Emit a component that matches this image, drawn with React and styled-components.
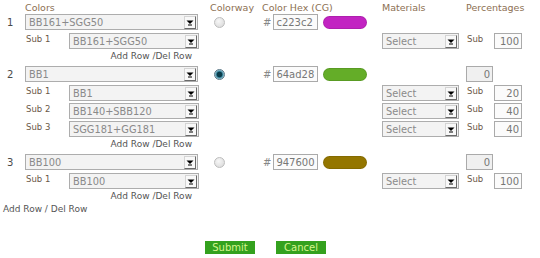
import React from "react";
import styled, { createGlobalStyle } from "styled-components";

const GlobalStyle = createGlobalStyle`
  body {
    margin: 0;
    background: #ffffff;
    font-family: "DejaVu Sans", Verdana, sans-serif;
  }
`;

const COLS = "25px 185px 52px 120px 84px 1fr";

const Page = styled.div`
  width: 540px;
  height: 258px;
  overflow: hidden;
`;

const HeaderRow = styled.div`
  display: grid;
  grid-template-columns: ${COLS};
  height: 14px;
  line-height: 16px;
  font-size: 9.5px;
  color: #8c6f52;
`;

const MainRow = styled.div`
  display: grid;
  grid-template-columns: ${COLS};
  align-items: center;
  height: 16px;
  margin-bottom: 3px;
`;

const SubRow = styled.div`
  display: grid;
  grid-template-columns: ${COLS};
  align-items: center;
  height: 16px;
  margin-bottom: 2px;
  &:last-of-type {
    margin-bottom: 0;
  }
`;

const Subs = styled.div`
  display: flex;
  flex-direction: column;
`;

const Num = styled.div`
  padding-left: 7px;
  font-size: 10px;
  color: #4a4a4a;
`;

const Cell = styled.div`
  display: flex;
  align-items: center;
  height: 16px;
`;

const SubLabel = styled.span`
  width: ${(p) => p.$w}px;
  align-self: flex-start;
  padding-left: 1px;
  padding-top: 1px;
  font-size: 8.5px;
  line-height: 11px;
  color: #6b5848;
`;

const SelectBox = styled.div`
  display: flex;
  align-items: center;
  box-sizing: border-box;
  width: ${(p) => p.$w}px;
  height: 16px;
  border: 1px solid #adadad;
  background: #f3f3f3;
  padding-left: 3px;
  font-size: 9.8px;
  color: #8a8a8a;
  white-space: nowrap;
`;

const Arrow = styled.span`
  display: flex;
  align-items: center;
  justify-content: center;
  margin-left: auto;
  margin-right: 1px;
  box-sizing: border-box;
  width: 12px;
  height: 13px;
  border: 1px solid;
  border-color: #d4d4d4 #6a6a6a #6a6a6a #d4d4d4;
  background: #f8f8f8;
`;

const Radio = styled.span`
  display: block;
  margin-left: 4px;
  box-sizing: border-box;
  width: 11px;
  height: 11px;
  border-radius: 50%;
  border: 1px solid ${(p) => (p.$on ? "#5a7888" : "#bdbdbd")};
  background: ${(p) =>
    p.$on
      ? "radial-gradient(circle, #0b3c4a 0 2.5px, #3b8aa2 3.2px, #c2d7df 5px)"
      : "radial-gradient(circle at 40% 35%, #f7f7f7, #d6d6d6)"};
`;

const Hash = styled.span`
  font-size: 10px;
  color: #888;
  margin: 0 2px 0 1px;
`;

const TextBox = styled.input`
  box-sizing: border-box;
  width: ${(p) => p.$w}px;
  height: 16px;
  margin: 0;
  padding: 0 2px;
  border: 1px solid #aaaaaa;
  background: ${(p) => (p.$dim ? "#f0f0f0" : "#fbfbfb")};
  font-family: "DejaVu Sans", Verdana, sans-serif;
  font-size: 10px;
  color: #777;
  text-align: ${(p) => (p.$right ? "right" : "left")};
  outline: none;
`;

const Pill = styled.span`
  display: block;
  margin-left: 5px;
  box-sizing: border-box;
  width: 44px;
  height: 13px;
  border-radius: 7px;
  background: ${(p) => p.$c};
  border: 1px solid rgba(0, 0, 0, 0.1);
`;

const AddLine = styled.div`
  display: grid;
  grid-template-columns: ${COLS};
  height: 17px;
  padding-top: 1px;
  box-sizing: border-box;
  line-height: 13px;
  font-size: 9px;
  color: #555;
  span {
    grid-column: 2;
    text-align: right;
    padding-right: 18px;
  }
`;

const FooterLink = styled.div`
  margin-top: -3px;
  padding-left: 3px;
  height: 12px;
  line-height: 12px;
  font-size: 9px;
  color: #555;
`;

const Buttons = styled.div`
  display: flex;
  gap: 21px;
  padding-left: 205px;
  margin-top: 26px;
`;

const Button = styled.button`
  box-sizing: border-box;
  width: 50px;
  height: 13px;
  margin: 0;
  padding: 0;
  border: none;
  background: #34a11e;
  color: #d6f48e;
  font-family: "DejaVu Sans", Verdana, sans-serif;
  font-size: 10px;
  line-height: 13px;
`;

const Select = ({ width, children }) => (
  <SelectBox $w={width}>
    <span>{children}</span>
    <Arrow>
      <svg width="8" height="7" viewBox="0 0 8 7">
        <path d="M0.5 1.5h7L4 5z" fill="#000" />
        <rect x="2" y="5.5" width="4" height="1" fill="#000" />
      </svg>
    </Arrow>
  </SelectBox>
);

const groups = [
  {
    n: 1,
    main: "BB161+SGG50",
    hex: "c223c2",
    subs: [{ name: "BB161+SGG50", pct: 100 }],
  },
  {
    n: 2,
    main: "BB1",
    on: true,
    hex: "64ad28",
    pct: 0,
    subs: [
      { name: "BB1", pct: 20 },
      { name: "BB140+SBB120", pct: 40 },
      { name: "SGG181+GG181", pct: 40 },
    ],
  },
  {
    n: 3,
    main: "BB100",
    hex: "947600",
    pct: 0,
    subs: [{ name: "BB100", pct: 100 }],
  },
];

export default function App() {
  return (
    <Page>
      <GlobalStyle />
      <HeaderRow>
        <span />
        <span>Colors</span>
        <span>Colorway</span>
        <span>Color Hex (CG)</span>
        <span>Materials</span>
        <span>Percentages</span>
      </HeaderRow>

      {groups.map((g) => (
        <div key={g.n}>
          <MainRow>
            <Num>{g.n}</Num>
            <Select width={173}>{g.main}</Select>
            <Radio $on={g.on} />
            <Cell>
              <Hash>#</Hash>
              <TextBox $w={45} readOnly value={g.hex} />
              <Pill $c={"#" + g.hex} />
            </Cell>
            <span />
            <Cell>{g.pct !== undefined && <TextBox $w={27} $dim $right readOnly value={g.pct} />}</Cell>
          </MainRow>
          <Subs>
            {g.subs.map((s, i) => (
              <SubRow key={i}>
                <span />
                <Cell>
                  <SubLabel $w={43}>Sub {i + 1}</SubLabel>
                  <Select width={130}>{s.name}</Select>
                </Cell>
                <span />
                <span />
                <Select width={77}>Select</Select>
                <Cell>
                  <SubLabel $w={27}>Sub</SubLabel>
                  <TextBox $w={28} $right readOnly value={s.pct} />
                </Cell>
              </SubRow>
            ))}
          </Subs>
          <AddLine>
            <span>Add Row /Del Row</span>
          </AddLine>
        </div>
      ))}

      <FooterLink>Add Row / Del Row</FooterLink>

      <Buttons>
        <Button>Submit</Button>
        <Button>Cancel</Button>
      </Buttons>
    </Page>
  );
}
